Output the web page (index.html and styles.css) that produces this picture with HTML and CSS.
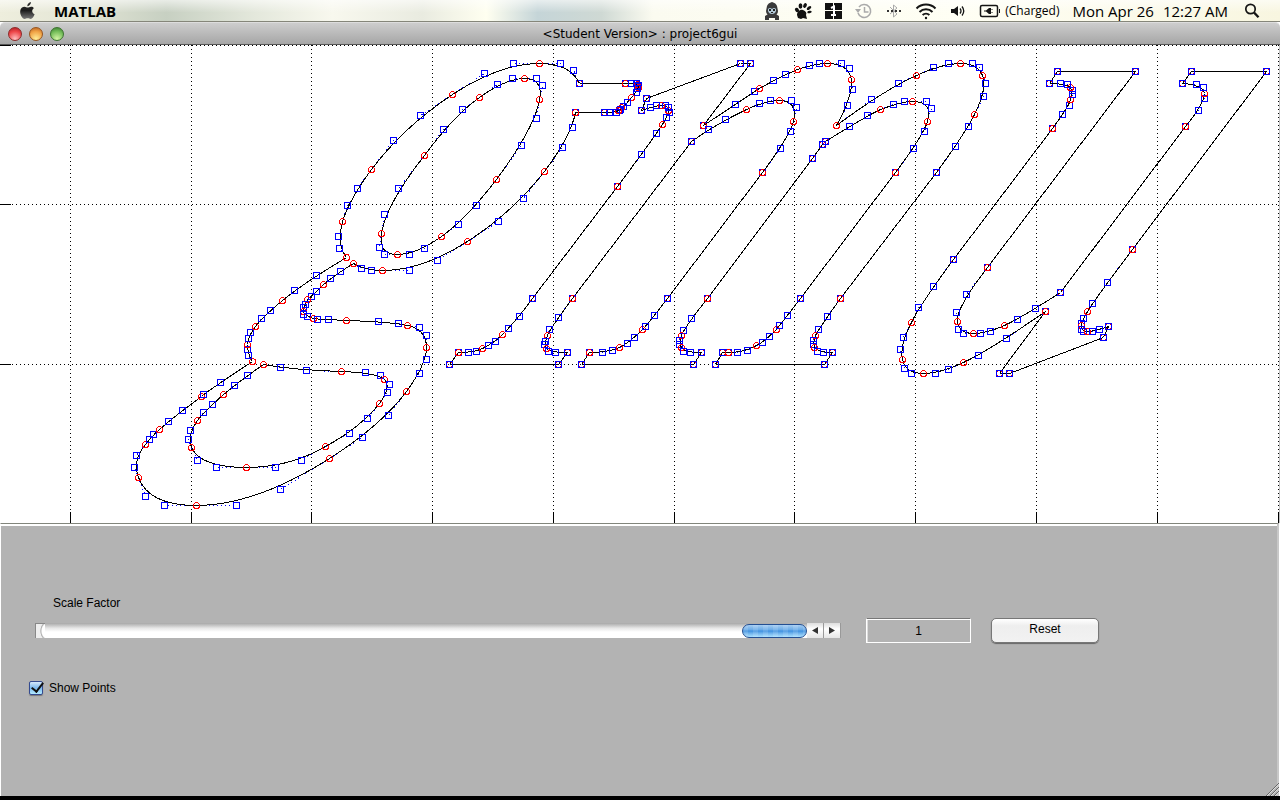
FILE: index.html
```html
<!DOCTYPE html>
<html lang="en">
<head>
<meta charset="utf-8">
<title>project6gui</title>
<link rel="stylesheet" href="styles.css">
</head>
<body>
<header class="menubar">
  <svg class="apple" width="18" height="20" viewBox="0 0 18 20" aria-label="Apple menu">
    <defs><linearGradient id="ap" x1="0" y1="0" x2="0" y2="1"><stop offset="0" stop-color="#333"/><stop offset=".5" stop-color="#1c1c1c"/><stop offset="1" stop-color="#777"/></linearGradient></defs>
    <path fill="url(#ap)" d="M12 1c0 2-1.600 4.300-3.700 4.200C8.100 3.200 10 1.300 12 1zM14.800 7.200c-2.400 1.500-2 4.900.8 6-.8 2.200-2.400 4.700-3.900 4.700-1.200 0-1.600-.7-3-.7s-1.900.7-3 .7C3.300 17.900.8 13.500 1.200 10c.4-3 2.300-4.200 4.300-4.200 1.300 0 2.300.8 3.200.8.900 0 2-.9 3.600-.8 1 0 2 .5 2.500 1.400z"/>
  </svg>
  <strong class="app">MATLAB</strong>
  <div class="status">
    <svg width="18" height="20" viewBox="0 0 18 20"><path fill="#3a3a3a" d="M4 5q1-3 5-4 4 1 5 4l1 5q0 2-1.500 3.500L16 15v4h-4v-2H6v2H2v-4l2.500-1.500Q3 12 3 10z"/><path fill="#b5cbd8" d="M5 8q2-2 4 0 2-2 4 0v2q-1 3-4 3T5 10z"/><path fill="#222" d="M6 8h2v2H6zM10 8h2v2h-2zM8 11h2v1H8z"/></svg>
    <svg width="18" height="18" viewBox="0 0 18 18"><g fill="#111"><ellipse cx="3" cy="8" rx="1.900" ry="2.400" transform="rotate(-35 3 8)"/><ellipse cx="6.500" cy="4" rx="1.900" ry="2.700"/><ellipse cx="11" cy="3.500" rx="1.700" ry="2.600" transform="rotate(25 11 3.500)"/><ellipse cx="15" cy="6" rx="1.400" ry="2.600" transform="rotate(55 15 6)"/><ellipse cx="15.500" cy="10" rx="1.300" ry="2.200" transform="rotate(80 15.500 10)"/><path d="M3 13c0-3 3-6 6-5s4 3 3 5l1 4-4-1-2 1-3-1z"/></g></svg>
    <svg width="17" height="16" viewBox="0 0 17 16"><path fill="#111" d="M0 0h8v7H0zM9 0h8v7H9zM0 8h8v8H0zM9 8h8v8H9z"/><path d="M6 5l3-1.500V12M6 12h5" fill="none" stroke="#fff" stroke-width="2"/></svg>
    <svg width="18" height="18" viewBox="0 0 18 18" fill="none" stroke="#aaa" stroke-width="1.500"><path d="M4 5a6.500 6.500 0 1 1-1 6M9.500 5v5h4"/><path d="M0 7h6L3 11z" fill="#aaa" stroke="none"/></svg>
    <svg width="16" height="16" viewBox="0 0 16 16"><path d="M4 4l7 7-3.500 3V2L11 5l-7 6" fill="none" stroke="#aaa"/><path fill="#333" d="M1 7h2v2H1zM5 7h2v2H5zM9 7h2v2H9zM13 7h2v2h-2z"/></svg>
    <svg width="22" height="18" viewBox="0 0 22 18" fill="none" stroke="#151515" stroke-width="2"><path d="M1.500 6.500a13.500 13.500 0 0 1 19 0M4.500 10a9.300 9.300 0 0 1 13 0M7.600 13a4.900 4.900 0 0 1 6.800 0"/><circle cx="11" cy="16" r="1.200" fill="#151515" stroke="none"/></svg>
    <svg width="16" height="16" viewBox="0 0 16 16"><path fill="#151515" d="M1 6h3l4-3v10l-4-3H1z"/><path d="M10 5.500q2 2.500 0 5M12 3.500q3.500 4.500 0 9" fill="none" stroke="#151515" stroke-width="1.300"/></svg>
    <span class="charge">
      <svg width="22" height="14" viewBox="0 0 22 14"><path d="M17 1.500H3Q1.500 1.500 1.500 3v8q0 1.500 1.500 1.500h14M17 1.500q1.500 0 1.500 1.500v8q0 1.500-1.500 1.500" fill="none" stroke="#151515" stroke-width="1.500"/><path fill="#151515" d="M20 5h1v4h-1zM5 6.500h2L10 4h2v1.500h2V6h-2v2h2v.500h-2V10h-2L7 7.500H5z"/></svg>
      (Charged)</span>
    <span class="clock"><span>Mon Apr 26</span><span>12:27 AM</span></span>
    <svg width="16" height="16" viewBox="0 0 16 16" fill="none" stroke="#151515"><circle cx="6.500" cy="6" r="4.700" stroke-width="1.700"/><path d="M10 9.500l4.500 4.800" stroke-width="2.400"/></svg>
  </div>
</header>
<main class="window">
  <div class="titlebar">
    <div class="lights">
      <button class="light red" aria-label="Close"></button>
      <button class="light amber" aria-label="Minimize"></button>
      <button class="light green" aria-label="Zoom"></button>
    </div>
    <h1 class="title">&lt;Student Version&gt; : project6gui</h1>
  </div>
  <svg class="plot" id="plot" viewBox="0 45 1280 478" shape-rendering="crispEdges"></svg>
  <form class="panel">
    <label class="caption" for="scale">Scale Factor</label>
    <div class="row">
      <div class="scroller">
        <span class="cap"></span>
        <input id="scale" class="range" type="range" min="0" max="1" step="0.01" value="1">
        <button type="button" class="step" aria-label="Decrease"><svg width="6" height="7" viewBox="0 0 6 7"><path d="M6 0v7L0 3.500z"/></svg></button>
        <button type="button" class="step" aria-label="Increase"><svg width="6" height="7" viewBox="0 0 6 7"><path d="M0 0v7l6-3.500z"/></svg></button>
      </div>
      <input class="value" type="text" value="1" aria-label="Scale value">
      <button type="button" class="reset">Reset</button>
    </div>
    <label class="check"><input type="checkbox" class="box" checked>Show Points</label>
    <svg class="grip" width="14" height="14" viewBox="0 0 14 14"><path d="M1 14L14 1M5 14l9-9M9 14l5-5" stroke="#666"/><path d="M2 14L14 2M6 14l8-8M10 14l4-4" stroke="#ddd"/></svg>
  </form>
</main>
<script src="plot.js"></script>
</body>
</html>
```

FILE: styles.css
```css
* { box-sizing: border-box; }
body {
  margin: 0;
  min-height: 100vh;
  display: flex;
  flex-direction: column;
  background: #000;
  color: #000;
  font-family: "Liberation Sans", Arial, sans-serif;
  font-size: 12px;
}
button, input { font: inherit; color: inherit; margin: 0; padding: 0; }

.menubar {
  height: 22px;
  flex: none;
  display: flex;
  align-items: center;
  padding: 0 20px 0 19px;
  border-bottom: 1px solid #85867a;
  background:
    linear-gradient(to bottom, rgba(255,255,255,.6), rgba(255,255,255,0) 60%),
    linear-gradient(to right, #eeeedd 0, #e4e6d6 6%, #c7d0c2 13%, #e4e8dc 20%, #f8f8ee 26%, #e9ebe0 33%, #fffff0 38%, #c5d5d8 42%, #cfd9d4 47%, #fbfbf0 51%, #fffff4 75%, #f8f6e0 100%);
  font-family: "Open Sans", "Noto Sans", sans-serif;
  font-size: 14px;
}
.app { margin-left: 17px; font-size: 15px; }
.status { margin-left: auto; display: flex; align-items: center; gap: 13px; }
.charge { display: flex; align-items: center; gap: 4px; font-size: 12px; }
.clock { display: flex; gap: 9px; margin-right: 3px; font-size: 15px; }

.window { flex: 1; display: flex; flex-direction: column; background: #fff; margin-bottom: 4px; }
.titlebar {
  height: 23px;
  flex: none;
  display: grid;
  grid-template-columns: 1fr auto 1fr;
  align-items: center;
  padding: 0 8px;
  border-top: 1px solid #ddd;
  border-bottom: 1px solid #555;
  border-radius: 5px 5px 0 0;
  background: linear-gradient(#cdcdcd, #a6a6a6);
}
.lights { display: flex; gap: 7px; }
.light {
  width: 14px;
  height: 14px;
  border: 1px solid #664;
  border-radius: 50%;
}
.red { border-color: #8c2a2a; background: radial-gradient(circle at 50% 90%, #ffc0c0, #ee4548 60%, #a51b22); }
.amber { border-color: #97551f; background: radial-gradient(circle at 50% 90%, #ffee98, #f0a245 60%, #b45d1f); }
.green { border-color: #3d7430; background: radial-gradient(circle at 50% 90%, #d5f5a5, #74bd59 60%, #36782d); }
.title {
  margin: 0;
  font-family: "DejaVu Sans", sans-serif;
  font-size: 12px;
  font-weight: 400;
  line-height: 20px;
}
.plot { display: block; width: 100%; height: auto; background: #fff; }

.panel {
  position: relative;
  flex: 1;
  display: flex;
  flex-direction: column;
  align-items: stretch;
  margin-right: 1px;
  padding: 70px 178px 20px 28px;
  border-top: 1px solid #82857c;
  border-left: 1px solid #fff;
  border-right: 2px solid #c8c8c8;
  background: #b3b3b3;
  box-shadow: inset 0 2px #fff;
}
.caption { padding-left: 24px; line-height: 18px; }
.row { display: flex; align-items: center; margin-top: 6px; padding-left: 6px; }
.scroller {
  flex: 1;
  display: flex;
  height: 15px;
  background: linear-gradient(#a8a8a8, #e8e8e8 35%, #fff 60%);
}
.cap {
  width: 10px;
  border: 1px solid #888;
  border-width: 1px 0 0 1px;
  background: radial-gradient(ellipse 8px 10px at 12px 7px, #fff 75%, #aaa 90%, #eee);
}
.range {
  appearance: none;
  flex: 1;
  min-width: 0;
  height: 15px;
  background: transparent;
}
.range::-webkit-slider-thumb {
  appearance: none;
  width: 65px;
  height: 14px;
  border: 1px solid #244f92;
  border-radius: 7px;
  background:
    repeating-linear-gradient(to right, rgba(255,255,255,.12) 0 5px, transparent 5px 10px),
    linear-gradient(#a5cdf2, #69abe8 40%, #3f91df 50%, #7cbcf0 75%, #a8e0ff);
}
.step {
  width: 17px;
  border: 0;
  border-right: 1px solid #999;
  background: linear-gradient(#ddd, #fff 40%, #e6e6e6);
  display: grid;
  place-items: center;
}
.step path { fill: #333; }
.value {
  width: 105px;
  height: 25px;
  margin-left: 25px;
  border: 1px solid #fff;
  border-top: 1px solid #777;
  outline: 0;
  box-shadow: inset 0 1px #fff, inset 1px 0 #ddd;
  background: #b3b3b3;
  text-align: center;
}
.reset {
  width: 108px;
  height: 25px;
  margin-left: 20px;
  padding-bottom: 3px;
  border: 1px solid #777;
  border-radius: 5px;
  background: linear-gradient(#fff, #eee 30%, #f2f2f2);
  box-shadow: 0 1px 1px #666;
}
.check {
  display: flex;
  align-items: center;
  align-self: flex-start;
  gap: 6px;
  margin-top: 35px;
  line-height: 20px;
}
.box {
  appearance: none;
  width: 14px;
  height: 14px;
  border: 1px solid #334a90;
  border-radius: 2px;
  background: linear-gradient(#d6e9fb, #7bb8ee 50%, #b4ebff);
  box-shadow: 0 1px 1px #777;
}
.box:checked::after {
  content: "";
  display: block;
  width: 5px;
  height: 10px;
  margin: -2px 0 0 4px;
  border: solid #111;
  border-width: 0 2px 2px 0;
  transform: rotate(38deg);
}
.grip { position: absolute; right: -2px; bottom: 0; }

.grid { stroke: #000; stroke-dasharray: 1 3; }
.tick { stroke: #000; }
.edge { stroke: #c0c0c0; }
.curve { stroke: #000; fill: none; }
.hull { stroke: #00f; fill: none; stroke-dasharray: 1 3; }
.anchor { stroke: #f00; fill: none; }
.control { stroke: #00f; fill: none; }
```

FILE: plot.js
```js
// Glyph outlines in screen pixels: M start, L line, C cubic.
const contours = [
  `M579,83 L625,83 C631,83 636,83 637,84 C638,85 638,86 638,87 C637,88 636,92 631,97
   C627,102 623,106 621,107 C620,109 619,110 618,110 C616,112 609,112 604,112 L575,112
   C572,127 562,147 544,171 C523,198 498,221 467,241 C437,260 409,270 382,270
   C371,270 361,268 353,263 C340,271 330,278 323,284 C316,291 311,296 307,299
   C305,304 303,307 303,311 C303,314 307,316 313,318 C317,319 328,319 346,320
   C378,321 398,323 407,325 C419,327 426,335 426,347 C426,359 419,373 406,391
   C388,415 362,437 329,458 C280,489 236,505 196,505 C164,505 145,496 138,477
   C134,467 136,455 145,444 C149,439 153,434 159,429 C168,421 182,410 201,396
   C203,394 220,382 252,361 C248,355 247,349 247,344 C248,338 250,332 255,326
   C261,318 270,310 282,300 C294,290 316,275 346,257 C339,248 338,236 342,221
   C347,205 357,188 371,169 C393,140 420,115 452,94 C484,73 513,63 539,63
   C560,63 573,70 579,83`,
  `M524,78 C512,78 497,84 479,97 C462,109 443,129 424,155 C398,188 384,214 381,233
   C379,247 384,254 397,254 C409,254 424,248 441,236 C458,224 476,205 496,179
   C521,145 536,118 539,99 C542,85 536,78 524,78`,
  `M263,364 C280,367 306,370 341,371 C365,372 380,375 384,379 C389,384 387,392 379,403
   C367,418 349,433 325,446 C301,460 275,467 246,467 C216,467 197,460 191,447
   C188,439 190,430 197,420 C203,412 212,404 223,394 C234,385 247,375 263,364`,
  `M641,110 L646,98 L740,63 L750,63 L703,125 C735,104 754,91 759,88 C773,80 785,74 797,69
   C809,65 819,63 827,63 C841,63 849,68 851,79 C852,89 847,105 836,125
   C871,99 898,83 916,75 C933,67 948,63 960,63 C972,63 979,67 982,75
   C985,83 983,96 974,114 C968,126 955,146 936,172 L840,298 C827,316 818,329 815,335
   C813,340 813,344 814,347 C817,351 823,352 832,352 L824,364 L715,364 L722,352 L728,352
   C737,352 747,350 756,345 C762,342 769,336 776,329 C779,325 787,315 800,298 L895,172
   C913,148 924,131 927,121 C931,108 926,101 912,101 C904,101 893,104 880,109
   C867,115 849,126 825,141 L822,144 L812,158 L707,298 C691,318 683,330 681,335
   C679,340 679,344 681,347 C683,351 690,352 701,352 L693,364 L581,364 L589,352
   C602,352 612,350 619,347 C627,343 634,337 642,329 C645,326 654,315 667,298 L762,172
   C780,148 790,131 793,121 C796,107 791,100 779,100 C770,100 759,103 746,109
   C725,119 708,129 691,141 L572,298 C558,317 549,329 547,335 C545,341 544,344 546,348
   C548,351 555,352 567,352 L558,364 L449,364 L458,352 C468,352 476,351 482,348
   C488,345 495,341 502,334 C508,328 519,316 532,298 L617,186 C641,154 656,133 662,124
   C666,117 669,112 668,110 C668,107 665,105 661,105 C656,105 650,107 641,110`,
  `M1049,83 L1057,71 L1135,71 L987,267 C966,294 956,312 957,321 C958,329 963,333 973,333
   C980,333 990,331 1004,325 C1017,319 1035,308 1060,292 L1185,126
   C1198,110 1204,98 1204,93 C1203,87 1196,84 1182,83 L1191,71 L1266,71 L1132,249
   C1107,282 1092,303 1087,311 C1083,318 1081,323 1081,325 C1081,329 1083,331 1087,331
   C1092,331 1099,329 1108,326 L1103,337 L1009,373 L999,373 L1045,311
   C1006,338 978,355 963,362 C948,369 935,373 923,373 C911,373 904,368 902,359
   C900,349 903,337 911,322 C918,307 933,286 953,259 L1052,128
   C1062,114 1069,105 1070,99 C1072,94 1072,90 1070,87 C1067,84 1060,83 1049,83`
];

const SVG = "http://www.w3.org/2000/svg";
const plot = document.getElementById("plot");
const layer = document.createElementNS(SVG, "g");
layer.setAttribute("transform", "translate(.5 .5)");
plot.append(layer);

function draw(tag, attrs) {
  const el = document.createElementNS(SVG, tag);
  for (const name in attrs) el.setAttribute(name, attrs[name]);
  layer.append(el);
}
const path = (kind, d) => draw("path", { class: kind, d });
const circle = (x, y) => draw("circle", { class: "anchor", cx: x, cy: y, r: 3 });
const square = (x, y) => path("control", `M${x - 3},${y - 3}h6v6h-6z`);

for (const x of [70, 191, 311, 432, 553, 674, 794, 915, 1036, 1157, 1278]) {
  path("grid", `M${x},44.5V523`);
  path("tick", `M${x},511V523`);
}
for (const y of [45, 204, 364]) {
  path("grid", `M-.5,${y}H1279`);
  path("tick", `M-.5,${y}H10`);
}
path("edge", "M1279,44.5V523");

for (const d of contours) {
  let pen = null;
  for (const [, op, body] of d.matchAll(/([MLC])([^MLC]*)/g)) {
    const pts = body.trim().split(/\s+/).map(p => p.split(",").map(Number));
    const end = pts[pts.length - 1];
    if (op !== "M") {
      const ctrl = op === "C" ? pts.slice(0, 2) : [pen, end];
      if (op === "C") path("hull", `M${pen}L${ctrl[0]}M${end}L${ctrl[1]}`);
      path("curve", `M${pen}C${ctrl[0]} ${ctrl[1]} ${end}`);
      circle(...pen);
      ctrl.forEach(p => square(...p));
    }
    pen = end;
  }
}
```
